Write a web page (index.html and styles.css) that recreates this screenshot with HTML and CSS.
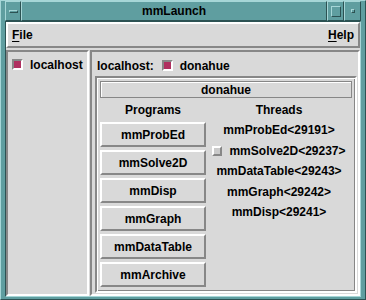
FILE: index.html
```html
<!DOCTYPE html>
<html lang="en">
<head>
  <meta charset="UTF-8" />
  <title>mmLaunch</title>
  <link rel="stylesheet" href="styles.css">
</head>
<body>
  <div class="window">
    <div class="titlebar">
      <div class="tb-btn menu-btn"><span class="bar"></span></div>
      <div class="title">mmLaunch</div>
      <div class="tb-btn max-btn"><span class="square"></span></div>
      <div class="tb-btn min-btn"><span class="dot"></span></div>
    </div>

    <div class="client">
      <div class="menubar">
        <span class="menu"><u>F</u>ile</span>
        <span class="menu"><u>H</u>elp</span>
      </div>

      <div class="main">
        <div class="panel hosts">
          <div class="toggle"><span class="check on"></span>localhost</div>
        </div>

        <div class="panel detail">
          <div class="host-row">
            <span>localhost:</span>
            <span class="check on"></span>
            <span>donahue</span>
          </div>

          <div class="machine">
            <div class="machine-title">donahue</div>
            <div class="cols">
              <div class="col programs">
                <div class="col-head">Programs</div>
                <button class="prog">mmProbEd</button>
                <button class="prog">mmSolve2D</button>
                <button class="prog">mmDisp</button>
                <button class="prog">mmGraph</button>
                <button class="prog">mmDataTable</button>
                <button class="prog">mmArchive</button>
              </div>
              <div class="col threads">
                <div class="col-head">Threads</div>
                <div class="thread">mmProbEd&lt;29191&gt;</div>
                <div class="thread"><span class="check small"></span>mmSolve2D&lt;29237&gt;</div>
                <div class="thread">mmDataTable&lt;29243&gt;</div>
                <div class="thread">mmGraph&lt;29242&gt;</div>
                <div class="thread">mmDisp&lt;29241&gt;</div>
              </div>
            </div>
          </div>
        </div>
      </div>
    </div>
  </div>
</body>
</html>
```

FILE: styles.css
```css
:root {
  --teal: #5f9ea0;
  --teal-light: #a6d6d7;
  --teal-dark: #2c5253;
  --grey: #d9d9d9;
  --shadow: #878787;
  --maroon: #b03060;
}

body {
  margin: 0;
  padding: 0;
  font-family: 'Liberation Sans', Arial, sans-serif;
  font-weight: bold;
  font-size: 12px;
  color: #000;
}

.window {
  width: 366px;
  height: 300px;
  box-sizing: border-box;
  background: var(--teal);
  border: 1px solid;
  border-color: var(--teal-light) var(--teal-dark) var(--teal-dark) var(--teal-light);
  padding: 0 4px 4px 4px;
  display: flex;
  flex-direction: column;
}

/* window manager title bar */
.titlebar {
  height: 20px;
  display: flex;
}

.tb-btn,
.title {
  box-sizing: border-box;
  height: 20px;
  border: 1px solid;
  border-color: var(--teal-light) var(--teal-dark) var(--teal-dark) var(--teal-light);
  display: flex;
  align-items: center;
  justify-content: center;
}

.menu-btn {
  width: 16px;
}

.title {
  flex: 1;
}

.max-btn,
.min-btn {
  width: 17px;
}

.bar {
  width: 9px;
  height: 3px;
  box-sizing: border-box;
  border: 1px solid;
  border-color: var(--teal-light) var(--teal-dark) var(--teal-dark) var(--teal-light);
}

.square {
  width: 10px;
  height: 11px;
  box-sizing: border-box;
  border: 1px solid;
  border-color: var(--teal-light) var(--teal-dark) var(--teal-dark) var(--teal-light);
}

.dot {
  width: 4px;
  height: 4px;
  box-sizing: border-box;
  border: 1px solid;
  border-color: var(--teal-light) var(--teal-dark) var(--teal-dark) var(--teal-light);
}

/* application area */
.client {
  flex: 1;
  display: flex;
  flex-direction: column;
  background: var(--grey);
  border: 1px solid;
  border-color: var(--teal-dark) var(--teal-light) var(--teal-light) var(--teal-dark);
}

.menubar {
  box-sizing: border-box;
  height: 26px;
  padding: 0 4px;
  border: 2px solid;
  border-color: #fff var(--shadow) var(--shadow) #fff;
  display: flex;
  justify-content: space-between;
  align-items: center;
}

.menu u {
  text-decoration-thickness: 1px;
  text-underline-offset: 2px;
}

.main {
  flex: 1;
  display: flex;
  gap: 1px;
  padding-top: 2px;
}

.panel {
  box-sizing: border-box;
  border: 2px solid;
  border-color: var(--shadow) #fff #fff var(--shadow);
}

.hosts {
  width: 83px;
  padding: 7px 0 0 4px;
}

.toggle {
  display: flex;
  align-items: center;
  gap: 7px;
  height: 11px;
}

.check {
  display: inline-block;
  box-sizing: border-box;
  width: 11px;
  height: 11px;
  border: 2px solid;
  border-color: var(--shadow) #fff #fff var(--shadow);
  background: var(--grey);
}

.check.on {
  background: var(--maroon);
}

.check.small {
  width: 10px;
  height: 10px;
  border-color: #fff var(--shadow) var(--shadow) #fff;
  background: #cacaca;
  margin-right: 7px;
}

.detail {
  flex: 1;
  display: flex;
  flex-direction: column;
}

.host-row {
  display: flex;
  align-items: center;
  height: 11px;
  padding: 8px 5px 0 5px;
  gap: 8px;
}

.host-row .check {
  margin-right: -1px;
}

.machine {
  flex: 1;
  margin: 5px 1px 1px 3px;
  padding: 3px;
  border: 2px solid;
  border-color: var(--shadow) #fff #fff var(--shadow);
  box-shadow: inset 1px 1px 0 #fff, inset -1px -1px 0 var(--shadow);
}

.machine-title {
  box-sizing: border-box;
  height: 17px;
  border: 1px solid var(--shadow);
  box-shadow: inset 1px 1px 0 #fff;
  display: flex;
  align-items: center;
  justify-content: center;
}

.cols {
  display: flex;
  margin-top: 2px;
}

.col {
  display: flex;
  flex-direction: column;
  align-items: center;
}

.programs {
  width: 106px;
}

.threads {
  flex: 1;
}

.col-head {
  height: 20px;
  line-height: 20px;
}

.prog {
  box-sizing: border-box;
  width: 106px;
  height: 25px;
  margin: 2px 0 1px;
  padding: 0;
  font: inherit;
  color: #000;
  background: var(--grey);
  border: 2px solid;
  border-color: #fff var(--shadow) var(--shadow) #fff;
}

.thread {
  height: 20.5px;
  display: flex;
  align-items: center;
}
```
